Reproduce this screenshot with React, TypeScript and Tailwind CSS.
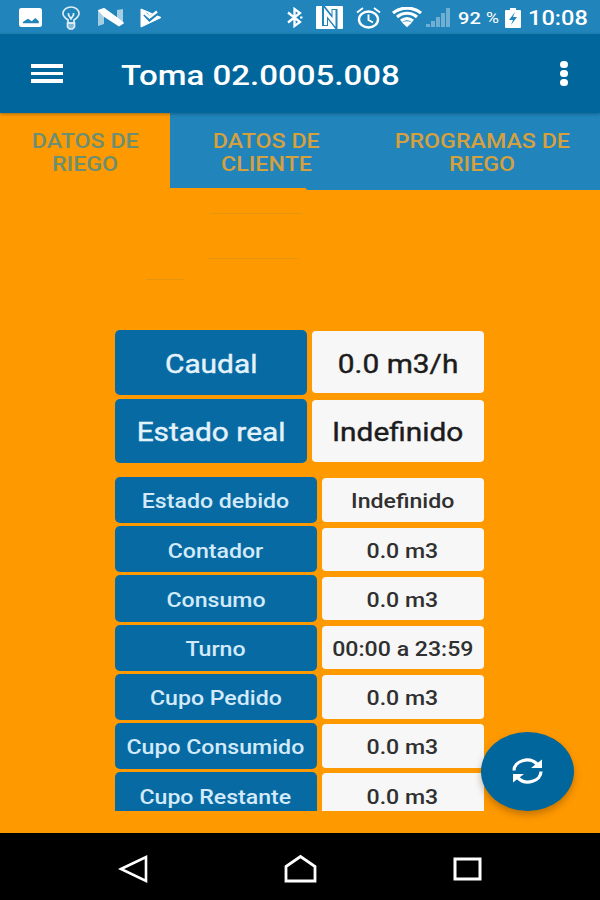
import React from "react";

const mainRows = [
  { label: "Caudal", value: "0.0 m3/h" },
  { label: "Estado real", value: "Indefinido" },
];

const detailRows = [
  { label: "Estado debido", value: "Indefinido" },
  { label: "Contador", value: "0.0 m3" },
  { label: "Consumo", value: "0.0 m3" },
  { label: "Turno", value: "00:00 a 23:59" },
  { label: "Cupo Pedido", value: "0.0 m3" },
  { label: "Cupo Consumido", value: "0.0 m3" },
  { label: "Cupo Restante", value: "0.0 m3" },
];

// Wide lettering used on the whole screen
const Wide = ({ children, left }: { children: React.ReactNode; left?: boolean }) => (
  <span className={`inline-block scale-x-[1.18] whitespace-nowrap ${left ? "origin-left" : "origin-center"}`}>
    {children}
  </span>
);

const StatusBar = () => (
  <div className="h-[34px] shrink-0 bg-[#2184ba] flex items-center justify-between pl-[19px] pr-[13px] pt-px text-white">
    <div className="flex items-center">
      <svg width="23" height="19" viewBox="3 3 18 18" preserveAspectRatio="none" fill="currentColor">
        <path fillRule="evenodd" d="M5 3h14q2 0 2 2v14q0 2-2 2H5q-2 0-2-2V5q0-2 2-2zM6 17.500h12.500v-2l-2.700-3-2.800 3-3-2.200-4 3z" />
      </svg>
      <svg className="ml-5" width="18" height="24" viewBox="0 0 18 24" fill="none" stroke="currentColor" strokeWidth="1.700" opacity=".85">
        <path d="M6 17v-3C3 12 1 10 1 7.500a8 6.500 0 0 1 16 0c0 2.500-2 4.500-5 6.500v3zM6.500 7v2l2.500 4 2.500-4V7" />
        <path d="M5.500 17h7v4l-2 2h-3l-2-2z" fill="currentColor" fillOpacity=".5" />
      </svg>
      <svg className="ml-[18px]" width="26" height="19" viewBox="0 0 26 19" fill="currentColor">
        <path d="M0 3l6-2v15l-6 2zM19 2l6-1v14l-6 2z" opacity=".6" />
        <path d="M1 2.500l5-1.800L19 10l6 5-4 2.500L6 8z" stroke="white" strokeWidth="1.500" />
      </svg>
      <svg className="ml-[16px]" width="22" height="20" viewBox="0 0 22 20">
        <path d="M1 1l20 8.500L1 19z" fill="white" stroke="white" strokeLinejoin="round" />
        <path d="M5 6l4.500 5L18 4" fill="none" stroke="#2184ba" strokeWidth="4.500" />
        <path d="M5 5.500l4.500 4L17 3.500" fill="none" stroke="white" strokeWidth="2.400" />
      </svg>
    </div>
    <div className="flex items-center font-medium">
      <svg width="16" height="21" viewBox="0 0 16 21" fill="none" stroke="currentColor" strokeWidth="2.300">
        <path d="M1 5.500l12 9.500-5.500 4V2L13 6 1 15.500" />
        <path d="M13 10.500h2.500" strokeWidth="2" />
      </svg>
      <svg className="ml-[13px]" width="27" height="23" viewBox="0 0 27 23" fill="none">
        <rect width="27" height="23" rx="1" fill="white" />
        <path d="M9 20V5l9.500 12V3" stroke="#2184ba" strokeWidth="6" />
        <path d="M9.500 19V6L18 16.500V4" stroke="white" strokeWidth="3" />
      </svg>
      <svg className="ml-[13px]" width="25" height="22" viewBox="0 0 25 22" fill="none" stroke="currentColor" strokeWidth="2.400">
        <ellipse cx="12.500" cy="12.500" rx="9.500" ry="8" />
        <path d="M12.500 7.500V13l4.500 2.500M1 5.500L7 1M24 5.500L18 1" strokeWidth="1.900" />
      </svg>
      <svg className="ml-[11px]" width="30" height="21" viewBox="0 0 30 21" fill="none" stroke="currentColor" strokeWidth="3.200">
        <path d="M1 6C9-.5 21-.5 29 6M5 10c6-5 14-5 20 0M9 13.900c4-3 8-3 12 0" />
        <path d="M10 15.500c3-1.800 7-1.800 10 0l-5 4.800z" fill="currentColor" stroke="none" />
      </svg>
      <svg className="ml-[4px]" width="24" height="20" viewBox="0 0 24 20" fill="currentColor" opacity=".35">
        <path d="M0 19v-3h4v3zM5 19v-6h4v6zM10 19V9h4v10zM15 19V5h4v14zM20 19V0h4v19z" />
      </svg>
      <span className="ml-[8px] w-[28px] pt-[2px] text-[17px]"><Wide left>92</Wide></span>
      <span className="w-[19px] pt-px text-[15px] font-normal"><Wide left>%</Wide></span>
      <svg width="16" height="20" viewBox="0 0 16 20">
        <path d="M1 2h4V0h6v2h4q1 0 1 1v16q0 1-1 1H1q-1 0-1-1V3q0-1 1-1z" fill="white" />
        <path d="M10 4L4 12h4l-2 5 6-8H8z" fill="#2184ba" />
      </svg>
      <span className="ml-[7px] w-[59px] pt-px text-[20px]"><Wide left>10:08</Wide></span>
    </div>
  </div>
);

const AppBar = () => (
  <div className="relative z-20 h-[79px] shrink-0 bg-[#00669c] flex items-center pl-[31px] pr-[32px] text-white shadow-[0_1px_3px_rgba(0,40,70,0.4)]">
    <button className="flex flex-col gap-[4px] w-8">
      <span className="h-[3.500px] w-full bg-white" />
      <span className="h-[3.500px] w-full bg-white" />
      <span className="h-[3.500px] w-full bg-white" />
    </button>
    <h1 className="ml-[58px] pt-[4px] text-[28px] font-medium leading-none"><Wide left>Toma 02.0005.008</Wide></h1>
    <button className="ml-auto flex flex-col gap-[2.500px]">
      <span className="h-[6.500px] w-2 rounded-full bg-white" />
      <span className="h-[6.500px] w-2 rounded-full bg-white" />
      <span className="h-[6.500px] w-2 rounded-full bg-white" />
    </button>
  </div>
);

const Tabs = () => (
  <div className="h-[77px] shrink-0 flex text-center text-[19.700px] leading-[23px] font-medium text-[#d5a03e]">
    <div className="w-[170px] pt-[17px] text-[#6b8f72]">
      <Wide>DATOS DE</Wide><br /><Wide>RIEGO</Wide>
    </div>
    <div className="relative z-10 w-[135px] h-[75px] pt-[17px] bg-[#2184ba]">
      <div className="w-[193px]">
        <Wide>DATOS DE</Wide><br /><Wide>CLIENTE</Wide>
      </div>
    </div>
    <div className="flex-1 pt-[17px] pl-[59px] bg-[#2184ba] rounded-bl-[4px]">
      <Wide>PROGRAMAS DE</Wide><br /><Wide>RIEGO</Wide>
    </div>
  </div>
);

const NavBar = () => (
  <div className="h-[67px] shrink-0 bg-black flex items-center pt-1 pl-[118px] pr-[118px] justify-between">
    <svg width="31" height="30" viewBox="0 0 31 30" fill="none" stroke="white" strokeWidth="2.600">
      <path d="M3 15L28 3v24z" />
    </svg>
    <svg width="35" height="30" viewBox="1 0 35 30" fill="none" stroke="white" strokeWidth="2.800">
      <path d="M3 12.500L17.500 2.500 32 12.500V27H3z" />
    </svg>
    <svg width="29" height="24" viewBox="0 0 29 24" fill="none" stroke="white" strokeWidth="3">
      <path d="M2 2h25v20H2z" />
    </svg>
  </div>
);

const App = () => {
  return (
    <div className="relative flex flex-col w-[600px] h-[900px] overflow-hidden bg-[#ff9900] font-[Roboto,sans-serif]">
      <StatusBar />
      <AppBar />
      <div className="relative shrink-0">
        <Tabs />
        {/* cell borders behind the panel */}
        <svg className="absolute left-0 top-0" width="600" height="190" fill="none" stroke="#8a8a50" strokeOpacity=".22">
          <path d="M210 100.500h92M208 145.500h90M146 166.500h38" />
        </svg>
      </div>
      <div className="flex-1 min-h-0 pt-[140px] pb-[22px] pl-[115px] pr-[116px]">
        <div className="h-full overflow-hidden">
          <div className="flex flex-col gap-1 [-webkit-text-stroke:0.4px_currentColor]">
            {mainRows.map((row) => (
              <div key={row.label} className="flex items-center gap-[5px] h-[64.500px] text-[25.300px]">
                <div className="w-[192px] h-full rounded-[5px] bg-[#076aa3] text-[#e3f2fb] flex items-center justify-center pt-[5px]">
                  <Wide>{row.label}</Wide>
                </div>
                <div className="flex-1 h-[62px] rounded-[4px] bg-[#f7f7f7] text-[#1c1c1c] flex items-center justify-center pt-[5px]">
                  <Wide>{row.value}</Wide>
                </div>
              </div>
            ))}
          </div>
          <div className="mt-[14px] flex flex-col gap-[3px] font-medium">
            {detailRows.map((row) => (
              <div key={row.label} className="flex shrink-0 items-center gap-[5px] h-[46.200px] text-[19.600px]">
                <div className="w-[202px] h-full rounded-[5px] bg-[#076aa3] text-[#d3eafa] flex items-center justify-center pt-[4px] pr-px">
                  <Wide>{row.label}</Wide>
                </div>
                <div className="flex-1 h-[43.500px] rounded-[4px] bg-[#f7f7f7] text-[#303030] flex items-center justify-center pt-[4px] pr-px">
                  <Wide>{row.value}</Wide>
                </div>
              </div>
            ))}
          </div>
        </div>
      </div>
      <button className="absolute left-[481px] top-[732px] w-[93px] h-[79px] rounded-[50%] bg-[#00669c] flex items-center justify-center shadow-[0_4px_7px_rgba(90,50,0,0.35)]">
        <svg className="mb-0.5" width="31" height="26" viewBox="0 0 31 26" fill="none" stroke="white" strokeWidth="3.200">
          <path d="M2 12.500C2 3 17-2 25 6M29 13.500c0 9.500-15 14.500-23 6.500" />
          <path d="M30 1.500V10H19zM1 24.500V16h11z" fill="white" stroke="none" />
        </svg>
      </button>
      <NavBar />
    </div>
  );
};

export default App;
